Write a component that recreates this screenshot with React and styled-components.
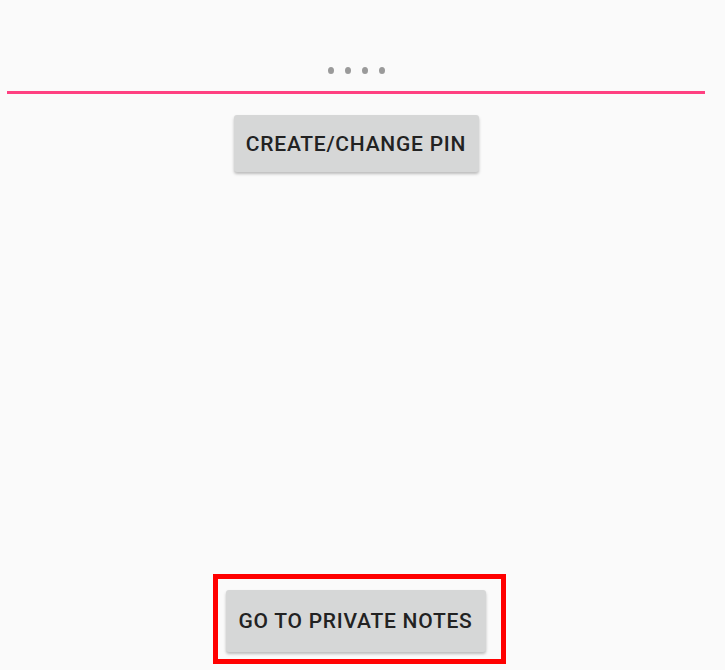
import React from 'react';
import styled, { createGlobalStyle } from 'styled-components';

const Global = createGlobalStyle`
  html, body { margin: 0; padding: 0; background: #fafafa; }
  body { font-family: Roboto, "Noto Sans", sans-serif; }
`;

const Screen = styled.div`
  height: 670px;
  display: flex;
  flex-direction: column;
  align-items: center;
  padding-right: 13px;
  background: #fafafa;
`;

const PinField = styled.div`
  width: 698px;
  height: 91px;
  border-bottom: 3px solid #ff4081;
  display: flex;
  justify-content: center;
  align-items: flex-end;
  gap: 11px;
  padding-bottom: 17px;
  box-sizing: border-box;
  height: 94px;
`;

const Dot = styled.span`
  width: 6px;
  height: 7px;
  border-radius: 50%;
  background: #9a9a9a;
`;

const Button = styled.button`
  font-family: Roboto, sans-serif;
  font-weight: 500;
  font-size: 21px;
  letter-spacing: 0.75px;
  color: #222;
  background: #d6d7d7;
  border: none;
  border-radius: 3px;
  height: ${p => p.$h}px;
  width: ${p => p.$w}px;
  margin-top: ${p => p.$top || 0}px;
  box-shadow: 0 2px 3px rgba(0, 0, 0, 0.25);
  padding: 0;
  text-transform: uppercase;
`;

const Spacer = styled.div`
  flex: 1;
`;

const Highlight = styled.div`
  border: 5px solid #ff0000;
  padding: 11px 15px 7px 8px;
  margin-bottom: 6px;
  margin-left: 6px;
`;

export default function App() {
  return (
    <Screen>
      <Global />
      <PinField>
        {[0, 1, 2, 3].map(i => <Dot key={i} />)}
      </PinField>
      <Button $w={245} $h={57} $top={21}>Create/Change Pin</Button>
      <Spacer />
      <Highlight>
        <Button $w={260} $h={62}>Go to Private Notes</Button>
      </Highlight>
    </Screen>
  );
}
